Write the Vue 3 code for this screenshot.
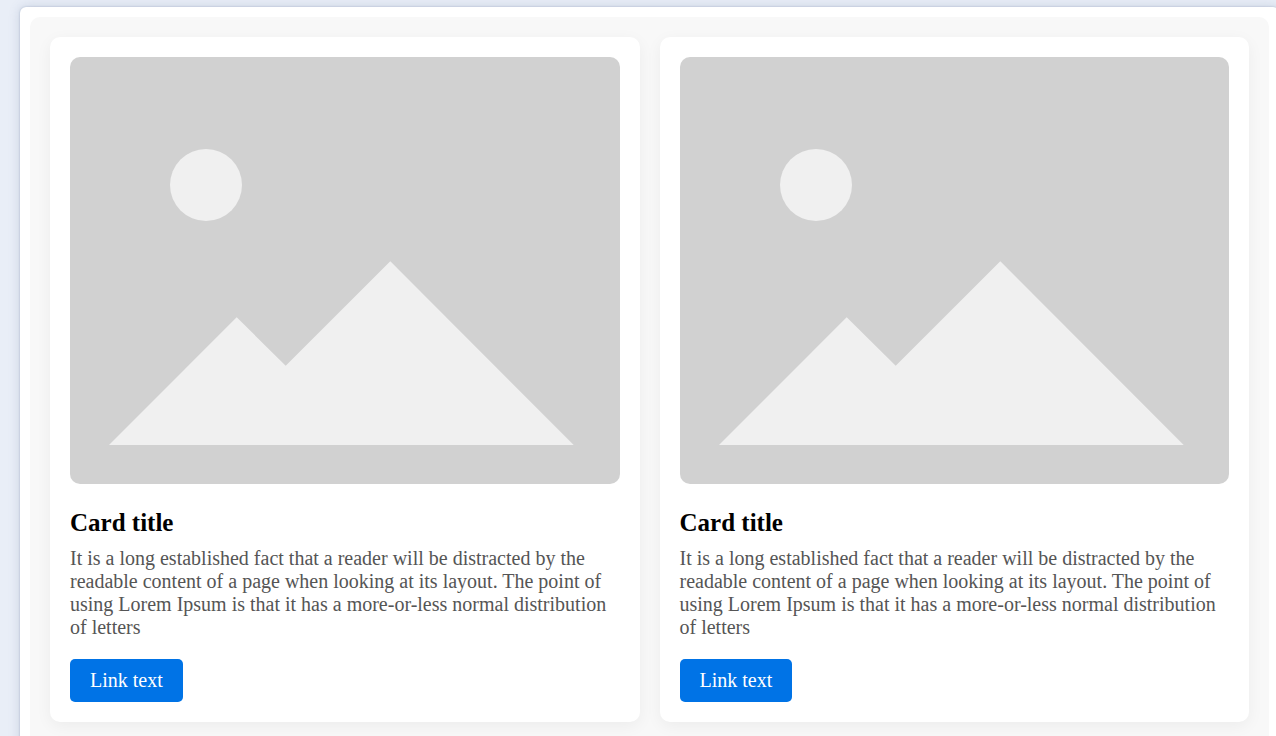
<script setup>
const cards = [0, 1]
</script>

<template>
  <div class="page">
    <div class="shell">
      <div class="inner">
        <article v-for="c in cards" :key="c" class="card">
          <svg class="thumb" viewBox="0 0 549.5 427" xmlns="http://www.w3.org/2000/svg">
            <circle cx="136" cy="128" r="36" fill="#f0f0f0" />
            <polygon points="39,388 166.7,260.3 215.7,308.7 320.3,204.3 503.7,388" fill="#f0f0f0" />
          </svg>
          <h2 class="title">Card title</h2>
          <p class="text">It is a long established fact that a reader will be distracted by the readable content of a page when looking at its layout. The point of using Lorem Ipsum is that it has a more-or-less normal distribution of letters</p>
          <a class="btn" href="#">Link text</a>
        </article>
      </div>
    </div>
  </div>
</template>

<style>
html, body { margin: 0; overflow: hidden; }
</style>

<style scoped>
.page {
  width: 1276px;
  height: 736px;
  overflow: hidden;
  box-sizing: border-box;
  padding: 7px 0 0 20px;
  background: #e9eef7;
  font-family: "Liberation Serif", serif;
}
.shell {
  width: 1259px;
  height: 800px;
  box-sizing: border-box;
  padding: 10px;
  background: #fff;
  border-radius: 6px;
  box-shadow: 0 0 2px rgba(70, 95, 135, 0.35), 0 0 12px rgba(80, 105, 145, 0.22);
}
.inner {
  display: flex;
  gap: 20px;
  align-items: flex-start;
  box-sizing: border-box;
  height: 780px;
  padding: 20px;
  background: #f8f8f8;
  border-radius: 10px;
}
.card {
  flex: 1 1 0;
  box-sizing: border-box;
  padding: 20px;
  background: #fff;
  border-radius: 10px;
  box-shadow: 0 4px 16px rgba(0, 0, 0, 0.05);
}
.thumb {
  display: block;
  width: 100%;
  height: 427px;
  background: #d1d1d1;
  border-radius: 10px;
}
.title {
  margin: 25px 0 10px;
  font-size: 25px;
  font-weight: 700;
  color: #000;
}
.text {
  margin: 0 0 20px;
  font-size: 20px;
  color: #555;
}
.btn {
  display: inline-block;
  padding: 10px 20px;
  background: #0073e6;
  color: #fff;
  font-size: 20px;
  text-decoration: none;
  border-radius: 5px;
  vertical-align: top;
}
</style>
